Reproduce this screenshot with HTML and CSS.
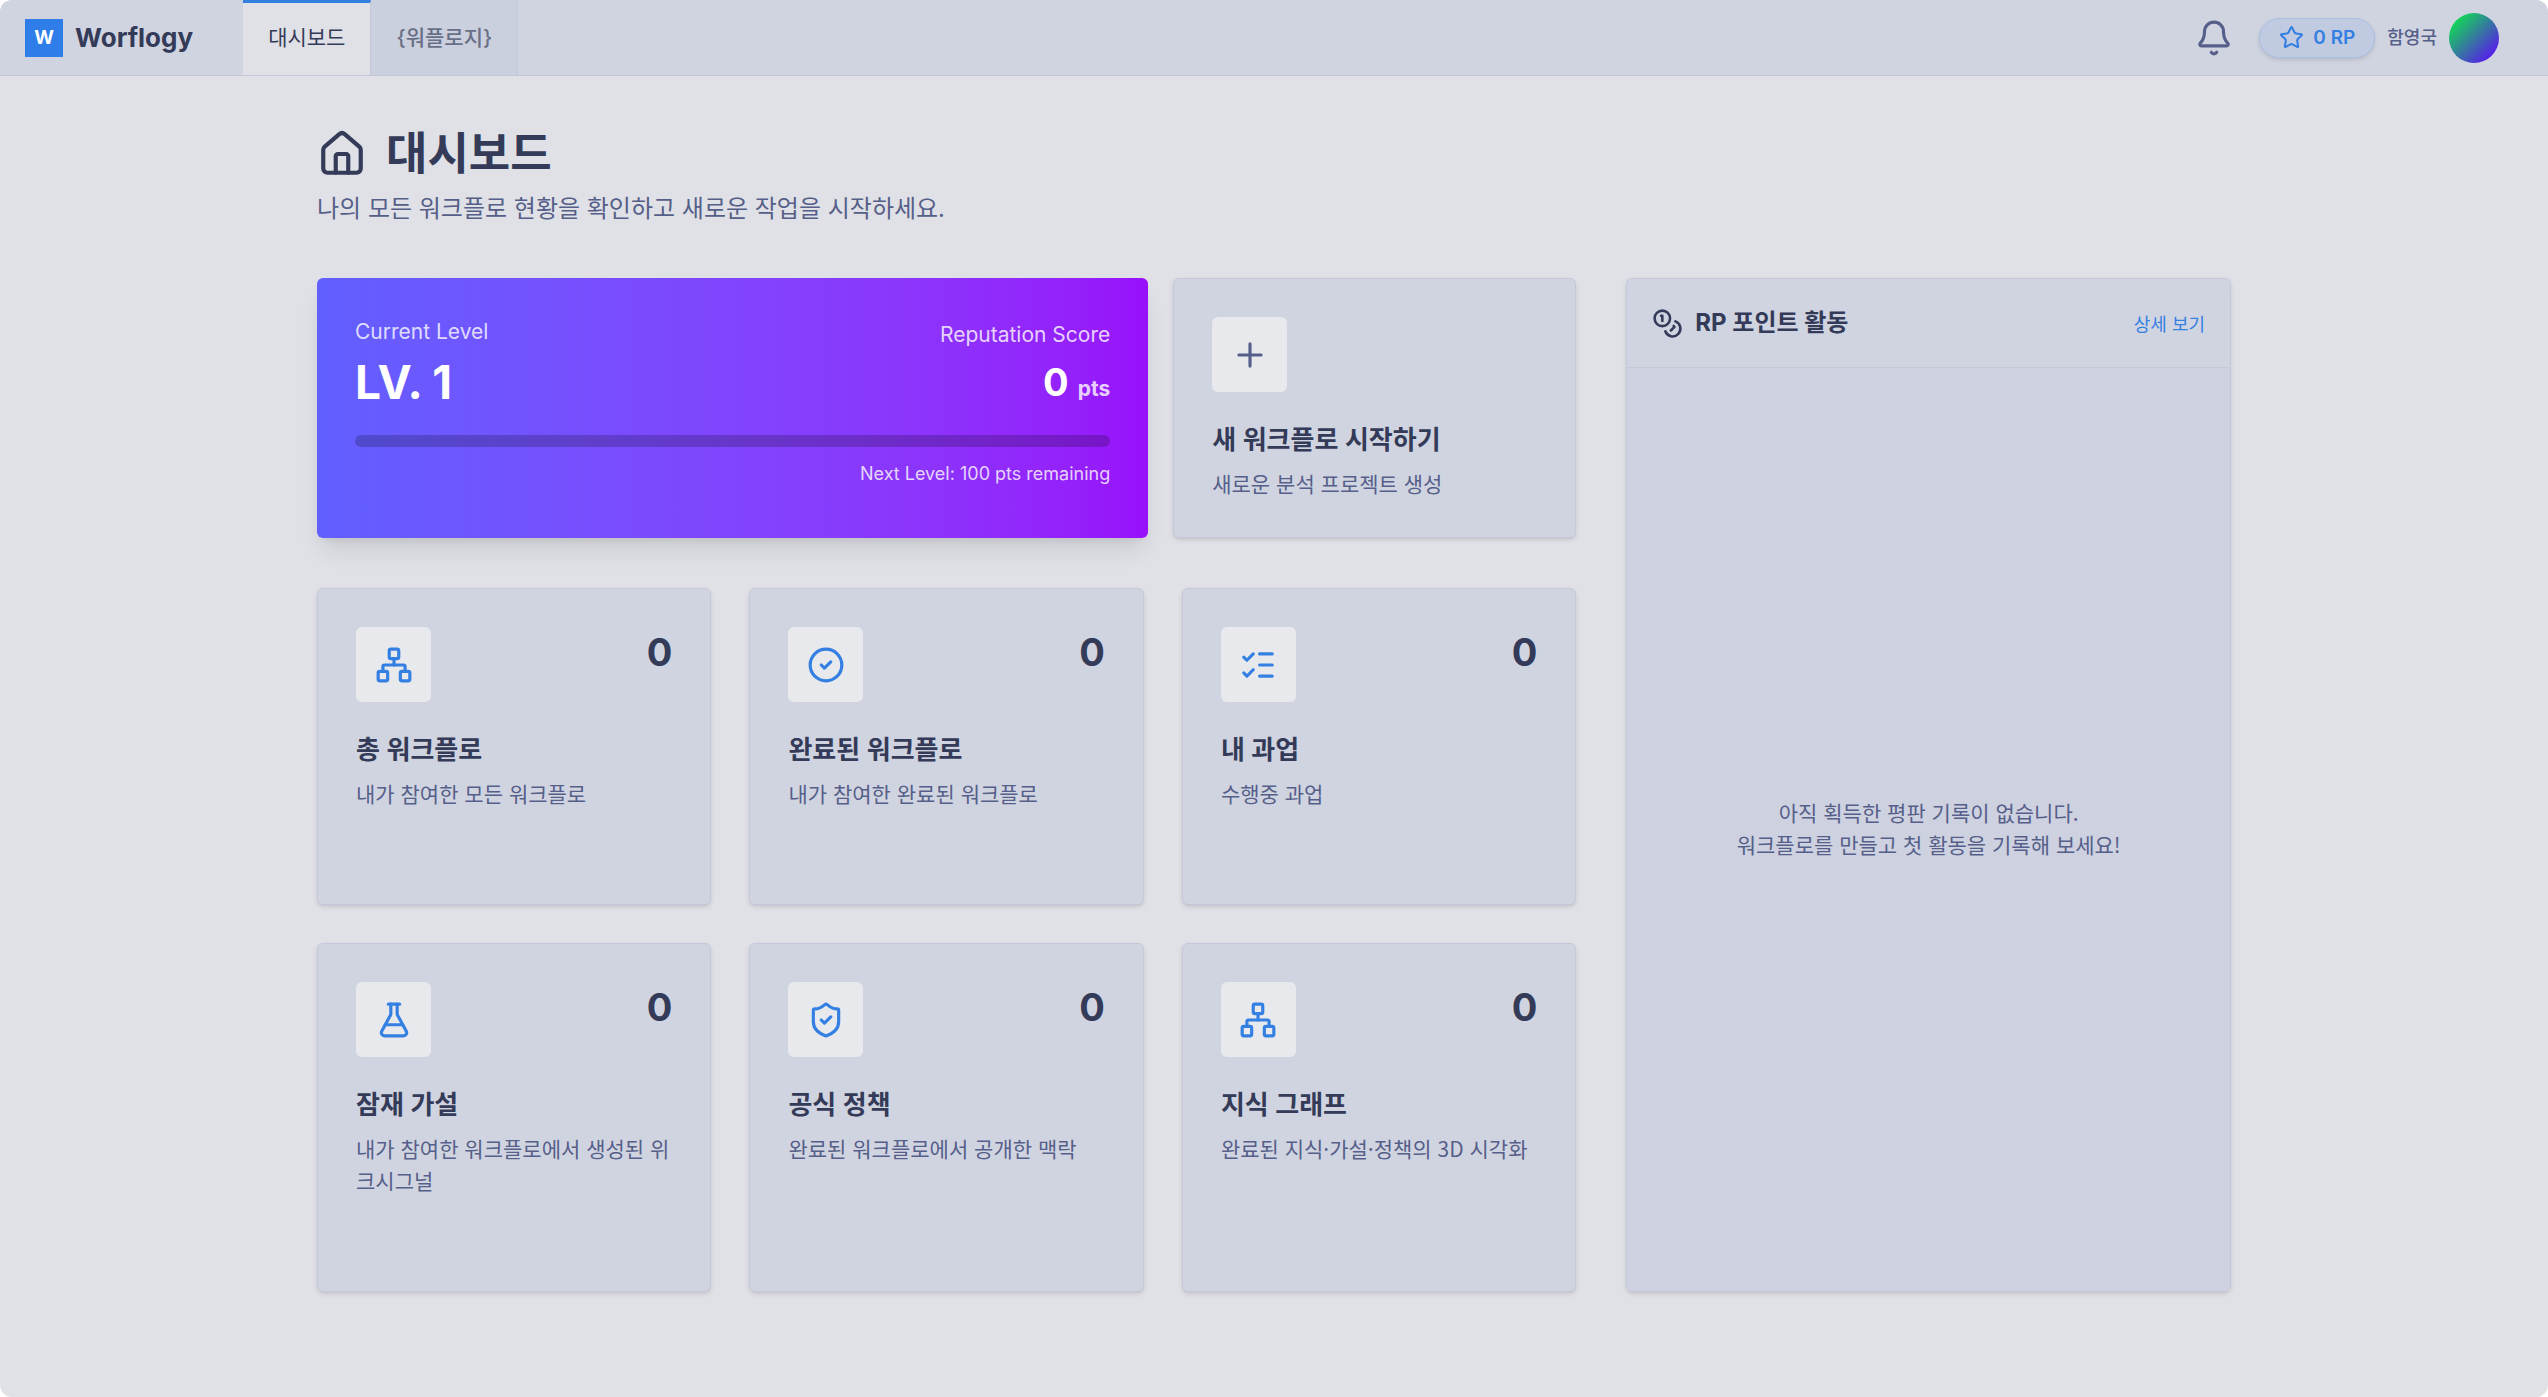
FILE: index.html
```html
<!DOCTYPE html>
<html lang="ko">
<head>
<meta charset="utf-8">
<meta name="viewport" content="width=device-width, initial-scale=1">
<title>Worflogy</title>
<link rel="stylesheet" href="styles.css">
</head>
<body>
<div class="app">
  <header class="topbar">
    <a class="brand" href="#"><span class="brand-mark">W</span><span class="brand-name">Worflogy</span></a>
    <nav class="tabs">
      <a class="tab tab-active" href="#" aria-current="page">대시보드</a>
      <a class="tab" href="#">{워플로지}</a>
    </nav>
    <div class="account">
      <button class="bell" type="button" aria-label="알림">
        <svg class="icon icon-lg" viewBox="0 0 24 24"><path d="M10.268 21a2 2 0 0 0 3.464 0"/><path d="M3.262 15.326A1 1 0 0 0 4 17h16a1 1 0 0 0 .74-1.673C19.41 13.956 18 12.499 18 8A6 6 0 0 0 6 8c0 4.499-1.411 5.956-2.738 7.326"/></svg>
      </button>
      <button class="points" type="button">
        <svg class="icon icon-sm" viewBox="0 0 24 24"><path d="M11.525 2.295a.53.53 0 0 1 .95 0l2.31 4.679a2.123 2.123 0 0 0 1.595 1.16l5.166.756a.53.53 0 0 1 .294.904l-3.736 3.638a2.123 2.123 0 0 0-.611 1.878l.882 5.14a.53.53 0 0 1-.771.56l-4.618-2.428a2.122 2.122 0 0 0-1.973 0L6.396 21.01a.53.53 0 0 1-.77-.56l.881-5.139a2.122 2.122 0 0 0-.611-1.879L2.16 9.795a.53.53 0 0 1 .294-.906l5.165-.755a2.122 2.122 0 0 0 1.597-1.16z"/></svg>
        0 RP
      </button>
      <span class="user-name">함영국</span>
      <span class="avatar"></span>
    </div>
  </header>

  <main class="page">
    <div class="page-head">
      <h1 class="page-title">
        <svg class="icon icon-xl" viewBox="0 0 24 24"><path d="M15 21v-8a1 1 0 0 0-1-1h-4a1 1 0 0 0-1 1v8"/><path d="M3 10a2 2 0 0 1 .709-1.528l7-6a2 2 0 0 1 2.582 0l7 6A2 2 0 0 1 21 10v9a2 2 0 0 1-2 2H5a2 2 0 0 1-2-2z"/></svg>
        대시보드
      </h1>
      <p class="page-lead">나의 모든 워크플로 현황을 확인하고 새로운 작업을 시작하세요.</p>
    </div>

    <div class="board">
      <div class="board-main">
        <div class="top-row">
          <section class="level">
            <div class="level-head">
              <div>
                <p class="level-label">Current Level</p>
                <p class="level-value">LV. 1</p>
              </div>
              <div class="level-score">
                <p class="level-label">Reputation Score</p>
                <p class="score-value">0 <span class="score-unit">pts</span></p>
              </div>
            </div>
            <div class="level-bar" role="progressbar" aria-valuenow="0" aria-valuemin="0" aria-valuemax="100" aria-label="Level"></div>
            <p class="level-next">Next Level: 100 pts remaining</p>
          </section>
          <a class="card" href="#">
            <div class="card-head"><span class="tile tile-muted"><svg class="icon icon-lg" viewBox="0 0 24 24"><path d="M5 12h14"/><path d="M12 5v14"/></svg></span></div>
            <h2 class="card-title">새 워크플로 시작하기</h2>
            <p class="card-text">새로운 분석 프로젝트 생성</p>
          </a>
        </div>

        <div class="stats">
          <a class="card" href="#">
            <div class="card-head"><span class="tile"><svg class="icon icon-lg" viewBox="0 0 24 24"><rect x="16" y="16" width="6" height="6" rx="1"/><rect x="2" y="16" width="6" height="6" rx="1"/><rect x="9" y="2" width="6" height="6" rx="1"/><path d="M5 16v-3a1 1 0 0 1 1-1h12a1 1 0 0 1 1 1v3"/><path d="M12 12V8"/></svg></span><span class="count">0</span></div>
            <h2 class="card-title">총 워크플로</h2>
            <p class="card-text">내가 참여한 모든 워크플로</p>
          </a>
          <a class="card" href="#">
            <div class="card-head"><span class="tile"><svg class="icon icon-lg" viewBox="0 0 24 24"><circle cx="12" cy="12" r="10"/><path d="m9 12 2 2 4-4"/></svg></span><span class="count">0</span></div>
            <h2 class="card-title">완료된 워크플로</h2>
            <p class="card-text">내가 참여한 완료된 워크플로</p>
          </a>
          <a class="card" href="#">
            <div class="card-head"><span class="tile"><svg class="icon icon-lg" viewBox="0 0 24 24"><path d="M13 5h8"/><path d="M13 12h8"/><path d="M13 19h8"/><path d="m3 17 2 2 4-4"/><path d="m3 7 2 2 4-4"/></svg></span><span class="count">0</span></div>
            <h2 class="card-title">내 과업</h2>
            <p class="card-text">수행중 과업</p>
          </a>
          <a class="card" href="#">
            <div class="card-head"><span class="tile"><svg class="icon icon-lg" viewBox="0 0 24 24"><path d="M14 2v6a2 2 0 0 0 .245.96l5.51 10.08A2 2 0 0 1 18 22H6a2 2 0 0 1-1.755-2.96l5.51-10.08A2 2 0 0 0 10 8V2"/><path d="M6.453 15h11.094"/><path d="M8.5 2h7"/></svg></span><span class="count">0</span></div>
            <h2 class="card-title">잠재 가설</h2>
            <p class="card-text">내가 참여한 워크플로에서 생성된 위크시그널</p>
          </a>
          <a class="card" href="#">
            <div class="card-head"><span class="tile"><svg class="icon icon-lg" viewBox="0 0 24 24"><path d="M20 13c0 5-3.5 7.5-7.66 8.95a1 1 0 0 1-.67-.01C7.5 20.5 4 18 4 13V6a1 1 0 0 1 1-1c2 0 4.5-1.2 6.24-2.72a1.17 1.17 0 0 1 1.52 0C14.51 3.81 17 5 19 5a1 1 0 0 1 1 1z"/><path d="m9 12 2 2 4-4"/></svg></span><span class="count">0</span></div>
            <h2 class="card-title">공식 정책</h2>
            <p class="card-text">완료된 워크플로에서 공개한 맥락</p>
          </a>
          <a class="card" href="#">
            <div class="card-head"><span class="tile"><svg class="icon icon-lg" viewBox="0 0 24 24"><rect x="16" y="16" width="6" height="6" rx="1"/><rect x="2" y="16" width="6" height="6" rx="1"/><rect x="9" y="2" width="6" height="6" rx="1"/><path d="M5 16v-3a1 1 0 0 1 1-1h12a1 1 0 0 1 1 1v3"/><path d="M12 12V8"/></svg></span><span class="count">0</span></div>
            <h2 class="card-title">지식 그래프</h2>
            <p class="card-text">완료된 지식·가설·정책의 3D 시각화</p>
          </a>
        </div>
      </div>

      <aside class="activity">
        <div class="activity-head">
          <h2 class="activity-title">
            <svg class="icon icon-md" viewBox="0 0 24 24"><circle cx="8" cy="8" r="6"/><path d="M18.09 10.37A6 6 0 1 1 10.34 18"/><path d="M7 6h1v4"/><path d="m16.71 13.88.7.71-2.82 2.82"/></svg>
            RP 포인트 활동
          </h2>
          <a class="activity-link" href="#">상세 보기</a>
        </div>
        <p class="activity-empty">아직 획득한 평판 기록이 없습니다.<br>워크플로를 만들고 첫 활동을 기록해 보세요!</p>
      </aside>
    </div>
  </main>
</div>
</body>
</html>
```
FILE: styles.css
```css
:root {
  --bg: #e0e1e6;
  --surface: #d0d4e1;
  --line: #c4c8da;
  --text: #343b58;
  --muted: #565f89;
  --primary: #2e7de9;
  --accent: #347fe2;
  --latin: Inter, "Noto Sans CJK KR", sans-serif;
}

* {
  box-sizing: border-box;
}

html {
  background: #fff;
}

body {
  margin: 0;
  color: var(--text);
  font-family: "Noto Sans CJK KR", Inter, sans-serif;
  font-size: 21px;
  line-height: 32px;
}

h1, h2, p {
  margin: 0;
}

a {
  color: inherit;
  text-decoration: none;
}

button {
  padding: 0;
  border: 0;
  background: none;
  color: inherit;
  font: inherit;
}

.app {
  min-height: 100vh;
  overflow: hidden;
  border-radius: 12px;
  background: var(--bg);
}

.icon {
  display: block;
  flex: none;
  fill: none;
  stroke: currentColor;
  stroke-width: 2;
  stroke-linecap: round;
  stroke-linejoin: round;
}

.icon-sm { width: 25px; height: 25px; }
.icon-md { width: 31px; height: 31px; }
.icon-lg { width: 38px; height: 38px; }
.icon-xl { width: 50px; height: 50px; }

/* Top bar */

.topbar {
  display: flex;
  height: 76px;
  padding: 0 49px 0 25px;
  border-bottom: 1px solid var(--line);
  background: var(--surface);
  font-family: var(--latin);
}

.brand {
  display: flex;
  align-items: center;
  gap: 12px;
  margin-right: 50px;
  font-weight: 700;
}

.brand-mark {
  width: 38px;
  background: var(--primary);
  color: #fff;
  font-size: 19px;
  line-height: 38px;
  text-align: center;
}

.brand-name {
  font-size: 26px;
}

.tabs {
  display: flex;
}

.tab {
  display: flex;
  align-items: center;
  padding: 0 25px 3px;
  border-top: 3px solid transparent;
  border-right: 1px solid var(--line);
  background: #cbd0de;
  color: #696f87;
  font-weight: 500;
}

.tab-active {
  border-top-color: var(--accent);
  background: var(--bg);
  color: var(--text);
  font-weight: 400;
}

.account {
  display: flex;
  align-items: center;
  gap: 12px;
  margin-left: auto;
}

.bell {
  margin-right: 14px;
  color: var(--muted);
}

.points {
  display: flex;
  align-items: center;
  gap: 9px;
  height: 40px;
  padding: 0 19px;
  border: 1px solid #a8c0e3;
  border-radius: 20px;
  background: #c0cbe1;
  box-shadow: 0 2px 4px rgba(0, 0, 0, 0.12);
  color: var(--accent);
  font-size: 19px;
  font-weight: 600;
}

.user-name {
  color: var(--muted);
  font-size: 18px;
  font-weight: 500;
}

.avatar {
  width: 50px;
  height: 50px;
  border-radius: 50%;
  background: linear-gradient(135deg, #0fe04f 10%, #5a14f0 90%);
}

/* Page */

.page {
  max-width: 1964px;
  margin: 0 auto;
  padding: 50px 25px;
}

.page-head {
  margin-bottom: 52px;
}

.page-title {
  display: flex;
  align-items: center;
  gap: 19px;
  margin-bottom: 6px;
  font-family: var(--latin);
  font-size: 45px;
  font-weight: 700;
  line-height: 56px;
}

.page-lead {
  color: var(--muted);
  font-size: 24px;
  line-height: 38px;
}

.board {
  display: grid;
  grid-template-columns: repeat(3, 1fr);
  gap: 50px;
}

.board-main {
  display: flex;
  grid-column: span 2;
  flex-direction: column;
  gap: 50px;
}

.top-row {
  display: grid;
  grid-template-columns: repeat(3, 1fr);
  gap: 25px;
}

.stats {
  display: grid;
  flex: 1;
  grid-template-columns: repeat(3, 1fr);
  gap: 38px;
}

/* Level card */

.level {
  grid-column: span 2;
  padding: 38px;
  border-radius: 6px;
  background: linear-gradient(90deg in oklab, #615fff, #9810fa);
  box-shadow: 0 16px 24px -5px rgba(0, 0, 0, 0.1), 0 6px 9px -6px rgba(0, 0, 0, 0.1);
  color: #fff;
  font-family: var(--latin);
}

.level-head {
  display: flex;
  align-items: center;
  justify-content: space-between;
  margin-bottom: 25px;
}

.level-score {
  text-align: right;
}

.level-label {
  margin-bottom: 6px;
  color: rgba(255, 255, 255, 0.8);
}

.level-value {
  font-size: 46px;
  font-weight: 700;
  line-height: 56px;
}

.score-value {
  font-size: 38px;
  font-weight: 700;
  line-height: 50px;
}

.score-unit {
  color: rgba(255, 255, 255, 0.8);
  font-size: 21px;
  line-height: 1;
}

.level-bar {
  height: 12px;
  margin-bottom: 14px;
  border-radius: 6px;
  background: rgba(0, 0, 0, 0.2);
}

.level-next {
  color: rgba(255, 255, 255, 0.8);
  font-size: 18px;
  line-height: 25px;
  text-align: right;
}

/* Cards */

.card,
.activity {
  border: 1px solid var(--line);
  border-radius: 6px;
  background: var(--surface);
  box-shadow: 0 2px 5px rgba(0, 0, 0, 0.1), 0 2px 3px -2px rgba(0, 0, 0, 0.1);
}

.card {
  display: block;
  padding: 38px;
}

.card-head {
  display: flex;
  align-items: flex-start;
  justify-content: space-between;
  margin-bottom: 25px;
}

.tile {
  display: grid;
  width: 75px;
  height: 75px;
  place-items: center;
  border-radius: 6px;
  background: #e8e9ed;
  color: var(--accent);
}

.tile-muted {
  color: var(--muted);
}

.count {
  font-family: var(--latin);
  font-size: 38px;
  font-weight: 700;
  line-height: 50px;
}

.card-title {
  margin-bottom: 4px;
  font-family: var(--latin);
  font-size: 26px;
  font-weight: 600;
  line-height: 46px;
}

.card-text {
  color: var(--muted);
}

/* Activity panel */

.activity {
  display: flex;
  min-height: 1014px;
  flex-direction: column;
}

.activity-head {
  display: flex;
  align-items: center;
  justify-content: space-between;
  padding: 28px 25px;
  border-bottom: 1px solid var(--line);
}

.activity-title {
  display: flex;
  align-items: center;
  gap: 12px;
  font-family: var(--latin);
  font-size: 24px;
  font-weight: 700;
  line-height: 32px;
}

.activity-link {
  color: var(--accent);
  font-size: 18px;
}

.activity-empty {
  display: grid;
  flex: 1;
  align-content: center;
  padding-bottom: 4px;
  background: #cdd1e0;
  color: var(--muted);
  text-align: center;
}
```
